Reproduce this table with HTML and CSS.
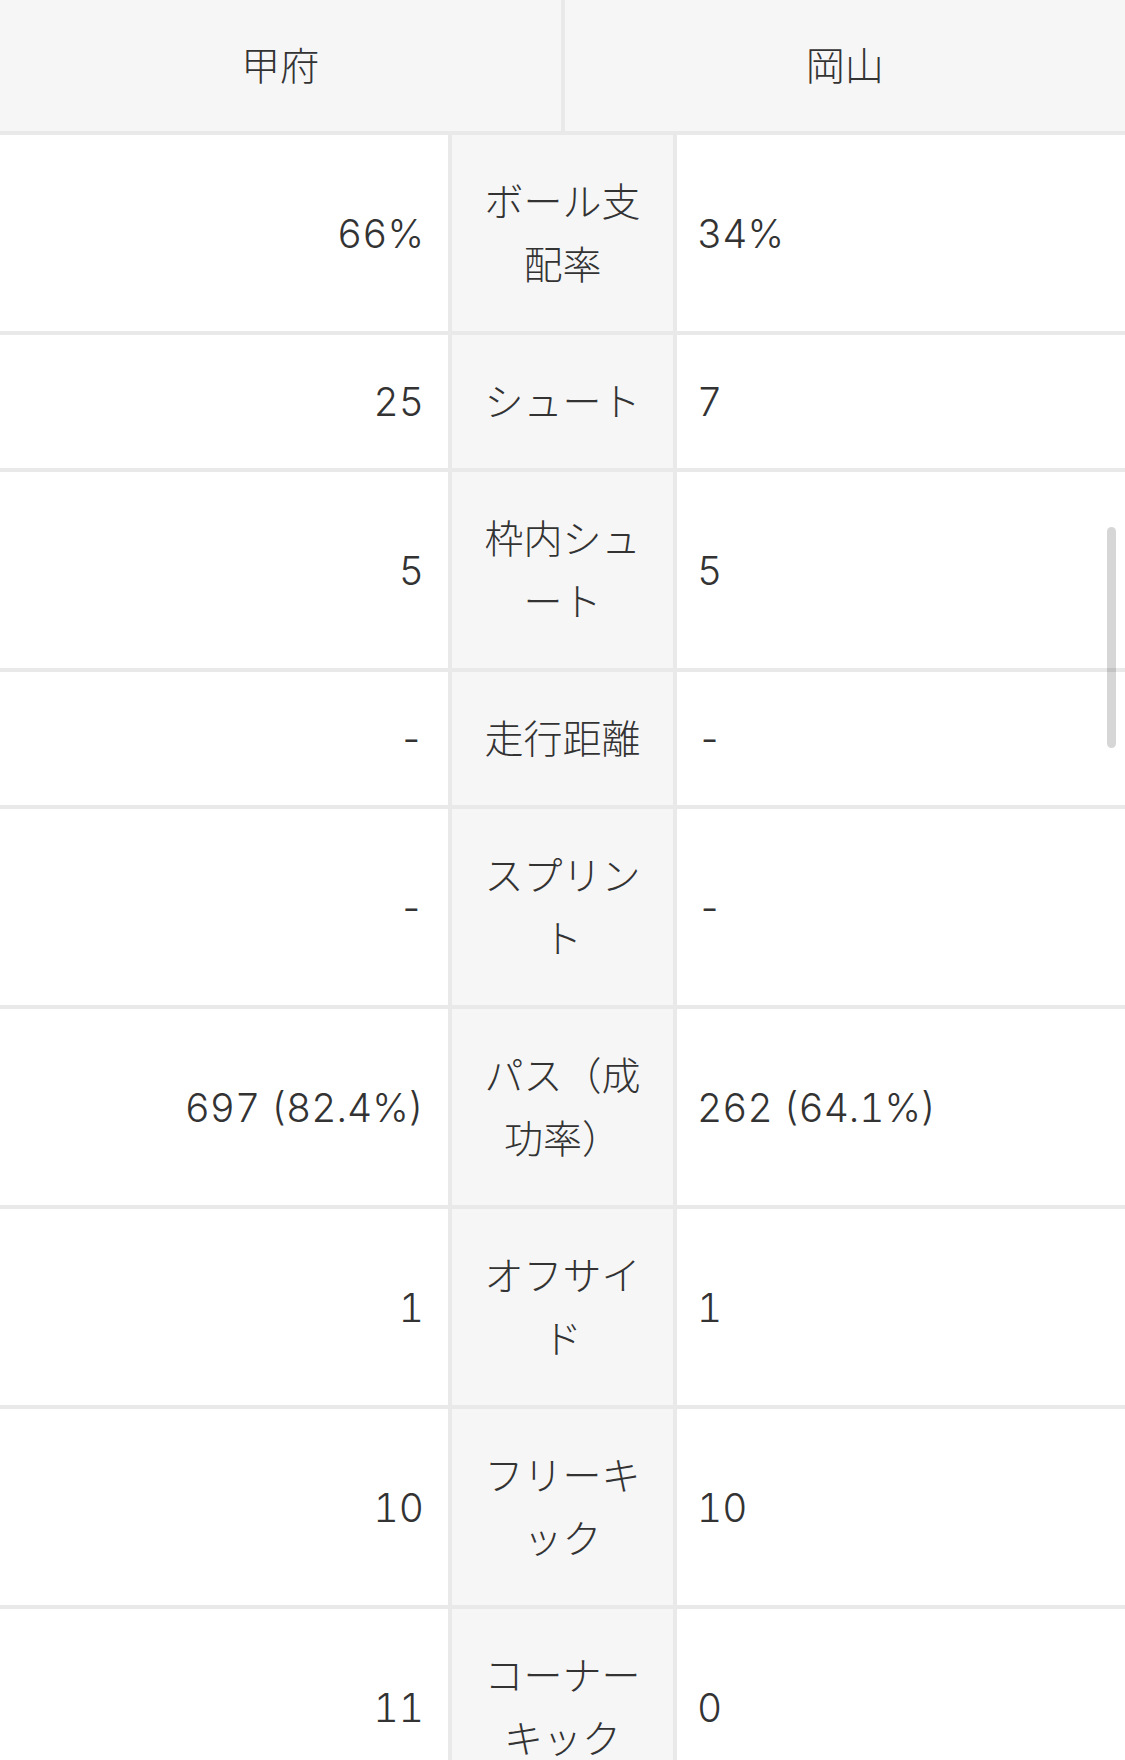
FILE: index.html
```html
<!DOCTYPE html>
<html lang="ja">
<head>
<meta charset="utf-8">
<title>スタッツ</title>
<link rel="stylesheet" href="styles.css">
</head>
<body>
<div class="stats">
  <div class="head">
    <div class="head-cell">甲府</div>
    <div class="head-cell">岡山</div>
  </div>
  <div class="row"><div class="cell home">66%</div><div class="cell label">ボール支配率</div><div class="cell away">34%</div></div>
  <div class="row"><div class="cell home">25</div><div class="cell label">シュート</div><div class="cell away">7</div></div>
  <div class="row"><div class="cell home">5</div><div class="cell label">枠内シュート</div><div class="cell away">5</div></div>
  <div class="row"><div class="cell home">-</div><div class="cell label">走行距離</div><div class="cell away">-</div></div>
  <div class="row"><div class="cell home">-</div><div class="cell label">スプリント</div><div class="cell away">-</div></div>
  <div class="row"><div class="cell home">697 (82.4%)</div><div class="cell label">パス（成功率）</div><div class="cell away">262 (64.1%)</div></div>
  <div class="row"><div class="cell home">1</div><div class="cell label">オフサイド</div><div class="cell away">1</div></div>
  <div class="row"><div class="cell home">10</div><div class="cell label">フリーキック</div><div class="cell away">10</div></div>
  <div class="row"><div class="cell home">11</div><div class="cell label">コーナーキック</div><div class="cell away">0</div></div>
</div>
<div class="scrollbar"></div>
</body>
</html>
```

FILE: styles.css
```css
html, body {
  margin: 0;
  padding: 0;
  background: #ffffff;
}
body {
  font-family: "Inter", "Noto Sans CJK JP", sans-serif;
  font-size: 39px;
  font-weight: 300;
  font-variant-numeric: tabular-nums;
  line-height: 63px;
  color: #333333;
  overflow: hidden;
  height: 1760px;
}
.stats {
  display: grid;
  row-gap: 4px;
  background: #e9e9e9;
}
.head {
  display: grid;
  grid-template-columns: 1fr 1fr;
  column-gap: 4px;
}
.head-cell {
  background: #f6f6f6;
  text-align: center;
  padding: 34px 24px;
}
.row {
  display: grid;
  grid-template-columns: 1fr 221px 1fr;
  column-gap: 4px;
}
.cell {
  display: flex;
  align-items: center;
  padding: 35px 24px;
  background: #ffffff;
}
.home {
  justify-content: flex-end;
  text-align: right;
}
.away {
  justify-content: flex-start;
  padding-left: 20px;
}
.label {
  background: #f6f6f6;
  justify-content: center;
  text-align: center;
}
.scrollbar {
  position: fixed;
  top: 527px;
  right: 9px;
  width: 9px;
  height: 221px;
  border-radius: 5px;
  background: rgba(0, 0, 0, 0.16);
}
```
